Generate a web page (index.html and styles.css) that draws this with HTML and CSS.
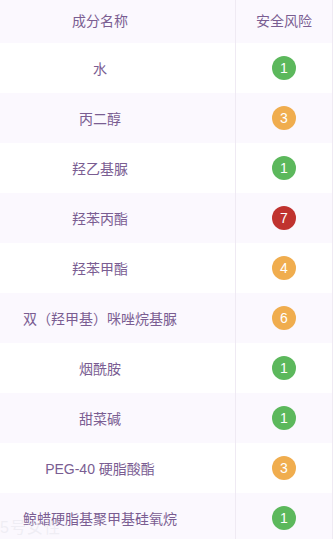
FILE: index.html
```html
<!DOCTYPE html>
<html lang="zh">
<head>
<meta charset="utf-8">
<link rel="stylesheet" href="styles.css">
</head>
<body>
<div class="table">
  <div class="row head"><div class="name">成分名称</div><div class="risk">安全风险</div></div>
  <div class="row"><div class="name">水</div><div class="risk"><span class="badge g">1</span></div></div>
  <div class="row alt"><div class="name">丙二醇</div><div class="risk"><span class="badge o">3</span></div></div>
  <div class="row"><div class="name">羟乙基脲</div><div class="risk"><span class="badge g">1</span></div></div>
  <div class="row alt"><div class="name">羟苯丙酯</div><div class="risk"><span class="badge r">7</span></div></div>
  <div class="row"><div class="name">羟苯甲酯</div><div class="risk"><span class="badge o">4</span></div></div>
  <div class="row alt"><div class="name">双（羟甲基）咪唑烷基脲</div><div class="risk"><span class="badge o">6</span></div></div>
  <div class="row"><div class="name">烟酰胺</div><div class="risk"><span class="badge g">1</span></div></div>
  <div class="row alt"><div class="name">甜菜碱</div><div class="risk"><span class="badge g">1</span></div></div>
  <div class="row"><div class="name">PEG-40 硬脂酸酯</div><div class="risk"><span class="badge o">3</span></div></div>
  <div class="row alt"><div class="name">鲸蜡硬脂基聚甲基硅氧烷</div><div class="risk"><span class="badge g">1</span></div></div>
</div>
<div class="watermark">5号女性</div>
</body>
</html>
```
FILE: styles.css
```css
html, body {
  margin: 0;
  padding: 0;
  background: #ffffff;
  font-family: "Liberation Sans", "Noto Sans CJK SC", sans-serif;
  overflow: hidden;
}
body {
  position: relative;
  height: 539px;
}
.table {
  width: 332px;
  border-right: 1px solid #efeaf3;
}
.row {
  display: flex;
  height: 50px;
  align-items: stretch;
  background: #ffffff;
}
.row.alt, .row.head {
  background: #fbf8fe;
}
.row.head {
  height: 43px;
}
.name, .risk {
  display: flex;
  align-items: center;
  justify-content: center;
  font-size: 14px;
  color: #7a5d92;
}
.name {
  width: 236px;
  border-right: 1px solid #efeaf3;
  box-sizing: border-box;
  padding-right: 35px;
}
.row.head .name, .row.head .risk {
  padding-bottom: 4px;
}
.risk {
  flex: 1;
}
.badge {
  width: 24px;
  height: 24px;
  border-radius: 50%;
  color: #ffffff;
  font-size: 14px;
  display: flex;
  align-items: center;
  justify-content: center;
}
.badge.g { background: #5cb85c; }
.badge.o { background: #f0ad4e; }
.badge.r { background: #c0332f; }
.watermark {
  position: absolute;
  left: 0;
  top: 519px;
  font-size: 16px;
  line-height: 18px;
  color: rgba(225, 225, 232, 0.45);
  letter-spacing: 1px;
  pointer-events: none;
}
```
